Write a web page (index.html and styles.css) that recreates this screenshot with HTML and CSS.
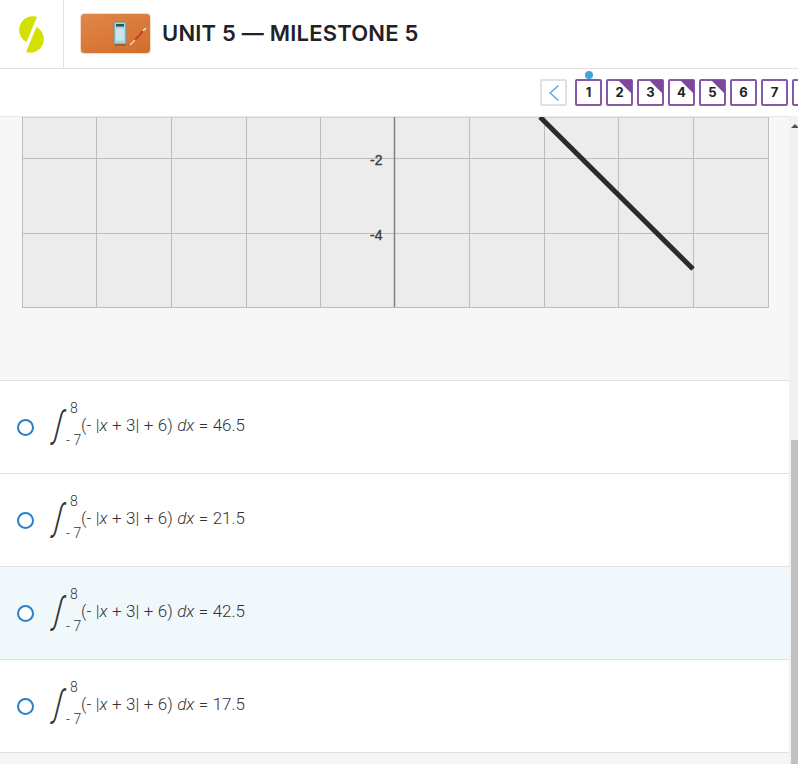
FILE: index.html
```html
<!DOCTYPE html>
<html lang="en">

<head>
    <meta charset="UTF-8">
    <meta name="viewport" content="width=device-width, initial-scale=1.0">
    <title>Unit 5 - Milestone 5</title>
    <link rel="stylesheet" href="styles.css">
</head>

<body>
    <header class="top_bar">
        <div class="logo_cell">
            <svg class="logo" width="27" height="37" viewBox="18 15 27 37">
                <path d="M37 16 A13.6 13.6 0 0 0 26.5 41 Z" fill="#d3e000" />
                <path d="M36.5 26 A13.6 13.6 0 0 1 26 51 Z" fill="#d3e000" />
            </svg>
        </div>
        <div class="thumb">
            <svg width="71" height="41" viewBox="0 0 71 41">
                <rect x="34" y="9" width="12" height="22" rx="1.5" fill="#a9d5d8" stroke="#6d8f93" stroke-width="1" />
                <rect x="36" y="11" width="8" height="2.5" fill="#33504f" />
                <rect x="36" y="15.5" width="8" height="12" fill="#c9e6e9" />
                <rect x="35" y="31.5" width="11" height="1" fill="#7d4a25" />
                <line x1="50" y1="32" x2="55" y2="27" stroke="#e8d8a0" stroke-width="1.6" />
                <line x1="55" y1="27" x2="63" y2="18" stroke="#c23a1e" stroke-width="1.8" />
                <line x1="63" y1="18" x2="66" y2="15" stroke="#e8e0d0" stroke-width="1.6" />
            </svg>
        </div>
        <h1 class="title">UNIT 5 — MILESTONE 5</h1>
    </header>

    <nav class="pager">
        <button class="prev" aria-label="Previous">
            <svg width="12" height="18" viewBox="0 0 12 18">
                <path d="M10.5 1.5 L2 9 L10.5 16.5" fill="none" stroke="#4aa3dc" stroke-width="1.2" />
            </svg>
        </button>
        <span class="page current">1</span>
        <span class="page done">2</span>
        <span class="page done">3</span>
        <span class="page done">4</span>
        <span class="page done">5</span>
        <span class="page">6</span>
        <span class="page">7</span>
        <span class="page"></span>
    </nav>

    <div class="scroll_area">
        <main class="content">
            <section class="graph_panel">
                <svg class="graph" width="747" height="191" viewBox="0 0 747 191">
                    <rect x="0.5" y="0" width="746" height="190.5" fill="#ececec" stroke="#bdbdbd" />
                    <g stroke="#bcbcbc" stroke-width="1">
                        <path d="M74.5 0V190M149.5 0V190M224.5 0V190M298.5 0V190M447.5 0V190M522.5 0V190M596.5 0V190M671.5 0V190" />
                        <path d="M0 41.5H746M0 116.5H746" />
                    </g>
                    <line x1="372.5" y1="0" x2="372.5" y2="190" stroke="#808080" stroke-width="1.5" />
                    <line x1="518" y1="0" x2="671" y2="152" stroke="#2b2b2b" stroke-width="5" />
                    <text class="tick" x="360.5" y="48" text-anchor="end">-2</text>
                    <text class="tick" x="360.5" y="123" text-anchor="end">-4</text>
                </svg>
            </section>

            <label class="option">
                <span class="radio"></span>
                <span class="math">
                    <span class="integral">∫</span>
                    <span class="limits"><span class="upper">8</span><span class="lower">- 7</span></span>
                    <span class="expr">(- |<i>x</i> + 3| + 6) <i>dx</i> = 46.5</span>
                </span>
            </label>
            <label class="option">
                <span class="radio"></span>
                <span class="math">
                    <span class="integral">∫</span>
                    <span class="limits"><span class="upper">8</span><span class="lower">- 7</span></span>
                    <span class="expr">(- |<i>x</i> + 3| + 6) <i>dx</i> = 21.5</span>
                </span>
            </label>
            <label class="option hover">
                <span class="radio"></span>
                <span class="math">
                    <span class="integral">∫</span>
                    <span class="limits"><span class="upper">8</span><span class="lower">- 7</span></span>
                    <span class="expr">(- |<i>x</i> + 3| + 6) <i>dx</i> = 42.5</span>
                </span>
            </label>
            <label class="option">
                <span class="radio"></span>
                <span class="math">
                    <span class="integral">∫</span>
                    <span class="limits"><span class="upper">8</span><span class="lower">- 7</span></span>
                    <span class="expr">(- |<i>x</i> + 3| + 6) <i>dx</i> = 17.5</span>
                </span>
            </label>
        </main>
        <div class="scrollbar">
            <span class="arrow"></span>
            <span class="thumb_bar"></span>
        </div>
    </div>
</body>

</html>
```

FILE: styles.css
```css
* {
    box-sizing: border-box;
}

html,
body {
    margin: 0;
    height: 764px;
    overflow: hidden;
    background-color: #fff;
    font-family: "Liberation Sans", Arial, sans-serif;
}

.top_bar {
    display: flex;
    align-items: center;
    height: 69px;
    border-bottom: 1px solid #e0e0e0;
}

.logo_cell {
    display: flex;
    align-items: center;
    justify-content: center;
    width: 64px;
    height: 68px;
    border-right: 1px solid #e0e0e0;
}

.thumb {
    width: 71px;
    height: 41px;
    margin: 0 0 1px 16px;
    border: 1px solid #f0dccd;
    border-radius: 4px;
    overflow: hidden;
    background: linear-gradient(160deg, #e08748, #d36c2c);
}

.thumb svg {
    display: block;
    margin: -1px;
}

.title {
    margin: 0 0 2px 11px;
    font-family: "Inter", sans-serif;
    font-size: 22px;
    font-weight: 600;
    letter-spacing: 0.2px;
    color: #1f2228;
}

.pager {
    display: flex;
    align-items: center;
    gap: 4px;
    height: 47px;
    padding-left: 540px;
    overflow: hidden;
}

.prev {
    display: flex;
    align-items: center;
    justify-content: center;
    flex: none;
    width: 27px;
    height: 27px;
    margin-right: 4px;
    padding: 0;
    background: #fff;
    border: 2px solid #dfe0e6;
    border-radius: 2px;
}

.page {
    position: relative;
    flex: none;
    width: 27px;
    height: 27px;
    border: 2px solid #8659a8;
    border-radius: 2px;
    font-family: "Inter", sans-serif;
    font-size: 13px;
    font-weight: 700;
    line-height: 23px;
    text-align: center;
    color: #1f2228;
}

.page.done::after {
    content: "";
    position: absolute;
    top: -1px;
    right: -1px;
    border-style: solid;
    border-width: 0 14px 14px 0;
    border-color: transparent #7d479e transparent transparent;
}

.page.current::before {
    content: "";
    position: absolute;
    top: -10px;
    left: 7.5px;
    width: 8px;
    height: 8px;
    border-radius: 50%;
    background-color: #45a2dc;
}

.scroll_area {
    display: flex;
    height: 648px;
}

.content {
    flex: 1;
    background-color: #f5f5f5;
    border-top: 1px solid #e8e8e8;
    overflow: hidden;
}

.graph_panel {
    height: 263px;
    padding-left: 21.5px;
    background-color: #f7f7f7;
}

.graph {
    display: block;
}

.tick {
    font-family: "Liberation Sans", sans-serif;
    font-size: 14px;
    font-weight: 400;
    fill: #3c3c3c;
    stroke: #3c3c3c;
    stroke-width: 0.4px;
}

.option {
    display: flex;
    align-items: center;
    gap: 18px;
    height: 93px;
    padding-left: 17px;
    border-top: 1px solid #e0e0e0;
    background-color: #fff;
}

.option.hover {
    background-color: #f1f8fc;
}

.option:last-child {
    height: 94px;
    border-bottom: 1px solid #e0e0e0;
}

.radio {
    flex: none;
    width: 17px;
    height: 17px;
    border: 2px solid #2a80c8;
    border-radius: 50%;
    background-color: #fff;
}

.math {
    display: flex;
    align-items: center;
    color: #333;
    font-family: "Roboto", sans-serif;
    font-size: 17px;
    font-weight: 300;
}

.integral {
    width: 14px;
    margin-bottom: 6px;
    font-family: "DejaVu Sans", sans-serif;
    font-size: 20px;
    font-weight: 200;
    line-height: 30px;
    text-align: center;
    transform: skewX(-14deg) scale(1, 1.9);
}

.limits {
    display: flex;
    flex-direction: column;
    justify-content: space-between;
    align-items: flex-start;
    width: 14px;
    height: 46px;
    margin-bottom: 6px;
    font-size: 14px;
    line-height: 14px;
}

.upper {
    margin-left: 4px;
}

.lower {
    white-space: nowrap;
}

.expr {
    margin: 0 0 5px 1px;
    white-space: nowrap;
    word-spacing: 0.3px;
    color: #333;
}

.scrollbar {
    position: relative;
    flex: none;
    width: 9px;
    background-color: #f1f1f1;
}

.arrow {
    position: absolute;
    top: 8px;
    right: -1px;
    border-style: solid;
    border-width: 0 4px 4px 4px;
    border-color: transparent transparent #505050 transparent;
}

.thumb_bar {
    position: absolute;
    top: 324px;
    left: 2px;
    right: 0;
    bottom: 0;
    background-color: #c1c1c1;
}
```
